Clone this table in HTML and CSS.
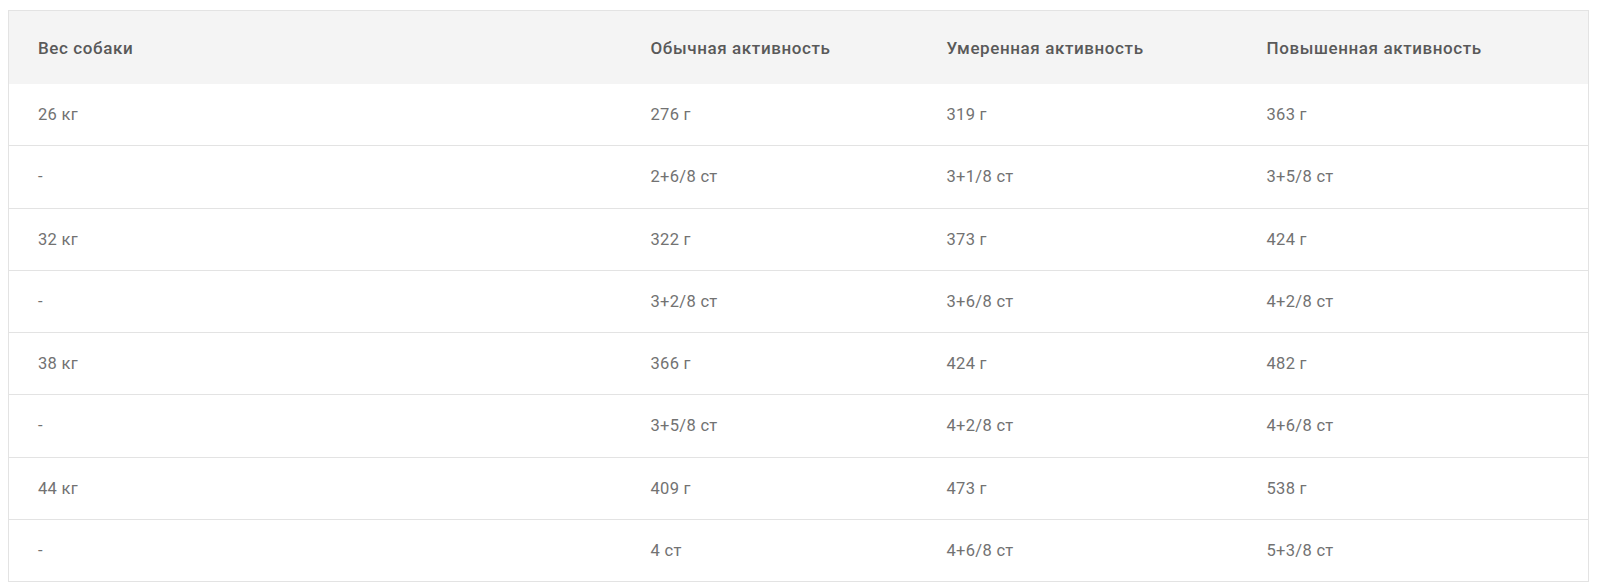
FILE: index.html
```html
<!DOCTYPE html>
<html lang="ru">
<head>
<meta charset="utf-8">
<title>Нормы кормления</title>
<link rel="stylesheet" href="styles.css">
</head>
<body>
<div class="wrap">
<table class="feed">
  <colgroup>
    <col class="c1"><col class="c2"><col class="c3"><col class="c4">
  </colgroup>
  <thead>
    <tr><th>Вес собаки</th><th>Обычная активность</th><th>Умеренная активность</th><th>Повышенная активность</th></tr>
  </thead>
  <tbody>
    <tr><td>26 кг</td><td>276 г</td><td>319 г</td><td>363 г</td></tr>
    <tr><td>-</td><td>2+6/8 ст</td><td>3+1/8 ст</td><td>3+5/8 ст</td></tr>
    <tr><td>32 кг</td><td>322 г</td><td>373 г</td><td>424 г</td></tr>
    <tr><td>-</td><td>3+2/8 ст</td><td>3+6/8 ст</td><td>4+2/8 ст</td></tr>
    <tr><td>38 кг</td><td>366 г</td><td>424 г</td><td>482 г</td></tr>
    <tr><td>-</td><td>3+5/8 ст</td><td>4+2/8 ст</td><td>4+6/8 ст</td></tr>
    <tr><td>44 кг</td><td>409 г</td><td>473 г</td><td>538 г</td></tr>
    <tr><td>-</td><td>4 ст</td><td>4+6/8 ст</td><td>5+3/8 ст</td></tr>
  </tbody>
</table>
</div>
</body>
</html>
```

FILE: styles.css
```css
html, body {
  margin: 0;
  padding: 0;
  background: #ffffff;
}
.wrap {
  padding: 10px 12px 0 8px;
}
.feed {
  width: 1580px;
  border-collapse: collapse;
  table-layout: fixed;
  font-family: Roboto, "Liberation Sans", sans-serif;
  border: 1px solid #e3e3e3;
  border-bottom: none;
}
.c1 { width: 613px; }
.c2 { width: 296px; }
.c3 { width: 320px; }
.c4 { width: 351px; }
.feed th {
  background: #f4f4f4;
  color: #595959;
  font-weight: 500;
  font-size: 17px;
  text-align: left;
  height: 73px;
  padding: 0 0 0 29px;
  letter-spacing: 0.6px;
}
.feed td {
  color: #727272;
  font-size: 16.5px;
  font-weight: 400;
  height: 61.25px;
  padding: 0 0 0 29px;
  border-bottom: 1px solid #e3e3e3;
  letter-spacing: 0.3px;
}
```
